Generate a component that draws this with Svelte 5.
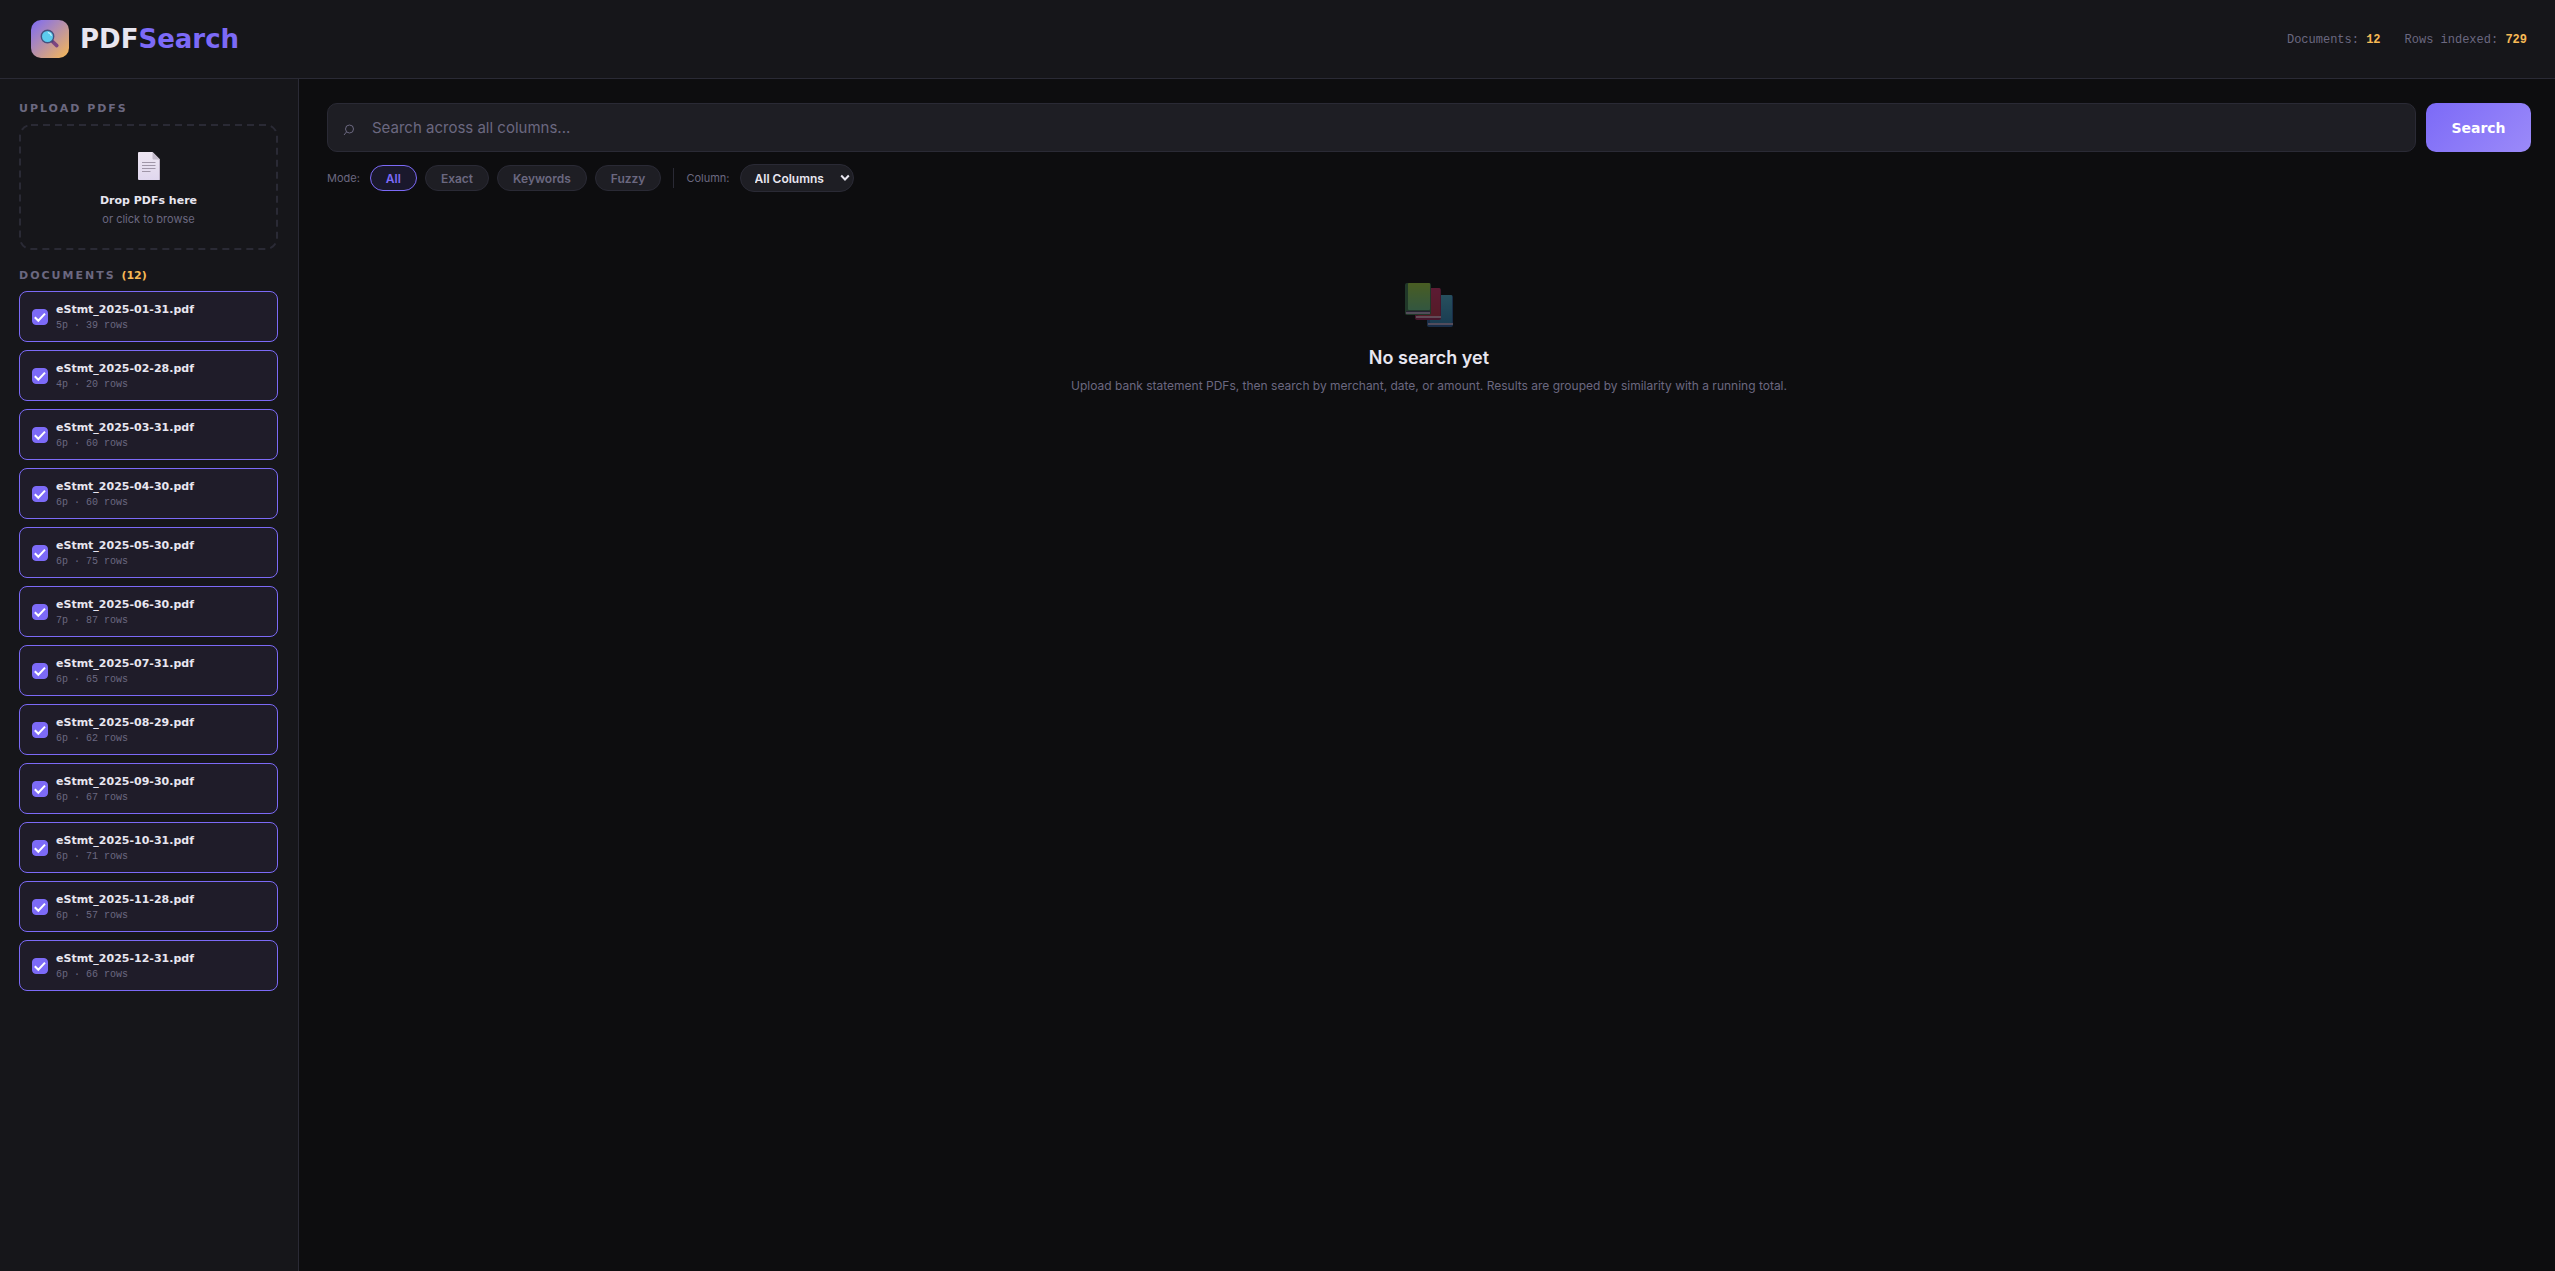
<script>
  const docs = $state(
    [
      ['01-31', 5, 39],
      ['02-28', 4, 20],
      ['03-31', 6, 60],
      ['04-30', 6, 60],
      ['05-30', 6, 75],
      ['06-30', 7, 87],
      ['07-31', 6, 65],
      ['08-29', 6, 62],
      ['09-30', 6, 67],
      ['10-31', 6, 71],
      ['11-28', 6, 57],
      ['12-31', 6, 66]
    ].map(([date, pages, rows]) => ({ name: `eStmt_2025-${date}.pdf`, pages, rows, checked: true }))
  );
  const totalRows = $derived(docs.reduce((sum, d) => sum + d.rows, 0));

  const modes = ['All', 'Exact', 'Keywords', 'Fuzzy'];
  let mode = $state('All');
  let query = $state('');
</script>

<div class="app">
  <header>
    <div class="brand">
      <span class="badge">
        <svg viewBox="0 0 20 20" width="20" height="20" aria-hidden="true">
          <path d="M12.2 12.2l4.6 4.4" stroke="#7b4580" stroke-width="3.6" stroke-linecap="round" />
          <path d="M11 11l2 2" stroke="#55406f" stroke-width="2" />
          <circle cx="7.5" cy="7.5" r="6.2" fill="#5ccbee" stroke="#46517f" stroke-width="1.4" />
          <path d="M8.4 3.6a4 4 0 0 1 2.8 2.8" stroke="#c5efff" stroke-width="1.3" stroke-linecap="round" fill="none" />
        </svg>
      </span>
      <h1>PDF<span>Search</span></h1>
    </div>
    <div class="stats">
      <span>Documents: <b>{docs.length}</b></span>
      <span>Rows indexed: <b>{totalRows}</b></span>
    </div>
  </header>

  <div class="body">
    <aside>
      <h2>Upload PDFs</h2>
      <button class="drop" type="button">
        <svg class="outline" aria-hidden="true">
          <rect x="1" y="1" rx="11" />
        </svg>
        <svg viewBox="0 0 22 28" width="22" height="28" aria-hidden="true">
          <defs>
            <linearGradient id="sheet" x1="0" y1="0" x2="0" y2="1">
              <stop offset="0" stop-color="#eee6f2" />
              <stop offset="1" stop-color="#e0d7ee" />
            </linearGradient>
          </defs>
          <path d="M1 0H14.5L22 7.5V27a1 1 0 0 1-1 1H1a1 1 0 0 1-1-1V1a1 1 0 0 1 1-1z" fill="url(#sheet)" />
          <path d="M14.5 0L22 7.5h-6.5a1 1 0 0 1-1-1z" fill="#c3bacb" />
          <path d="M21.5 8v19.5" stroke="#bdb1c6" />
          <path d="M4 10.5h13.500M4 13.500h13.500M4 16.500h13.500M4 19.500h8.500" stroke="#a096a8" />
        </svg>
        <strong>Drop PDFs here</strong>
        <span>or click to browse</span>
      </button>

      <h2>Documents <b>({docs.length})</b></h2>
      <ul>
        {#each docs as doc}
          <li>
            <label class="doc" class:selected={doc.checked}>
              <input type="checkbox" bind:checked={doc.checked} />
              <svg class="tick" viewBox="0 0 16 16" width="16" height="16" aria-hidden="true">
                <path d="M2.800 8.200L6.300 11.700L13 4.600" />
              </svg>
              <span class="info">
                <span class="name">{doc.name}</span>
                <span class="meta">{doc.pages}p · {doc.rows} rows</span>
              </span>
            </label>
          </li>
        {/each}
      </ul>
    </aside>

    <main>
      <form class="search" onsubmit={(e) => e.preventDefault()}>
        <label class="field">
          <svg viewBox="0 0 12 12" width="12" height="12" aria-hidden="true">
            <circle cx="6.500" cy="5" r="4" />
            <path d="M3.600 7.800L1 11" />
          </svg>
          <input type="text" aria-label="Search" placeholder="Search across all columns..." bind:value={query} />
        </label>
        <button class="submit" type="submit">Search</button>
      </form>

      <div class="filters">
        <span class="caption">Mode:</span>
        {#each modes as m}
          <button type="button" class="chip" class:active={mode === m} onclick={() => (mode = m)}>{m}</button>
        {/each}
        <span class="divider"></span>
        <label class="caption" for="column">Column:</label>
        <span class="picker">
          <select id="column">
            <option>All Columns</option>
          </select>
          <svg viewBox="0 0 10 8" width="10" height="8" aria-hidden="true"><path d="M1.200 1.500L5 5.500L8.800 1.500" /></svg>
        </span>
      </div>

      <section class="empty">
        <svg viewBox="0 0 48 44" width="48" height="44" aria-hidden="true">
          <defs>
            <linearGradient id="green" x1="0" y1="0" x2="0" y2="1">
              <stop offset="0" stop-color="#a3d540" />
              <stop offset="1" stop-color="#6cc58a" />
            </linearGradient>
            <linearGradient id="red" x1="0" y1="0" x2="0" y2="1">
              <stop offset="0" stop-color="#d3306b" />
              <stop offset="1" stop-color="#c0304a" />
            </linearGradient>
            <linearGradient id="blue" x1="0" y1="0" x2="0" y2="1">
              <stop offset="0" stop-color="#4eb4d4" />
              <stop offset="1" stop-color="#2f86b8" />
            </linearGradient>
          </defs>
          <rect x="22" y="12" width="26" height="32" rx="2" fill="#2c5f9e" />
          <rect x="25" y="12" width="22" height="28" rx="1" fill="url(#blue)" />
          <rect x="23" y="40" width="25" height="2" fill="#b9aad0" />
          <rect x="10" y="5" width="26" height="32" rx="2" fill="#9c2559" />
          <rect x="13" y="5" width="22" height="28" rx="1" fill="url(#red)" />
          <rect x="11" y="33" width="25" height="2" fill="#e0a9c4" />
          <rect x="0" y="0" width="26" height="32" rx="2" fill="#3e7a50" />
          <rect x="3" y="0" width="22" height="27" rx="1" fill="url(#green)" />
          <rect x="1" y="28" width="24" height="3" fill="#4a4265" />
          <rect x="1" y="29" width="24" height="2" fill="#b9aac8" />
        </svg>
        <h3>No search yet</h3>
        <p>
          Upload bank statement PDFs, then search by merchant, date, or amount. Results are grouped by similarity with a
          running total.
        </p>
      </section>
    </main>
  </div>
</div>

<style>
  :global(body) {
    background: #0d0d0f;
  }

  .app {
    --surface: #16161a;
    --raised: #1e1e24;
    --line: #2a2a35;
    --accent: #7c6af7;
    --amber: #f7b955;
    --muted: #6b6880;
    --text: #e8e6f0;
    --wide: 'DejaVu Sans', Verdana, sans-serif;
    min-height: 100vh;
    display: flex;
    flex-direction: column;
    background: #0d0d0f;
    color: var(--text);
    font-family: Inter, 'Liberation Sans', sans-serif;
    font-size: 12px;
  }

  .app * {
    box-sizing: border-box;
  }

  button,
  input,
  select {
    font: inherit;
    color: inherit;
  }

  h1,
  h2,
  h3,
  p,
  ul {
    margin: 0;
    padding: 0;
  }

  header {
    display: flex;
    align-items: center;
    justify-content: space-between;
    padding: 20px 28px 20px 31px;
    background: var(--surface);
    border-bottom: 1px solid var(--line);
  }

  .brand {
    display: flex;
    align-items: center;
    gap: 11px;
  }

  .badge {
    display: grid;
    place-items: center;
    width: 38px;
    height: 38px;
    border-radius: 10px;
    background: linear-gradient(135deg, var(--accent), var(--amber));
  }

  h1 {
    font-family: var(--wide);
    font-size: 26px;
    line-height: 30px;
    font-weight: 700;
  }

  h1 span {
    color: var(--accent);
  }

  .stats {
    display: flex;
    gap: 24px;
    padding-top: 2px;
    font-family: 'Liberation Mono', monospace;
    font-size: 12px;
    color: var(--muted);
  }

  .stats b {
    color: var(--amber);
  }

  .body {
    flex: 1;
    display: flex;
  }

  aside {
    flex: none;
    width: 299px;
    padding: 22px 20px 22px 19px;
    background: var(--surface);
    border-right: 1px solid var(--line);
  }

  h2 {
    font-family: var(--wide);
    font-size: 11px;
    line-height: 16px;
    font-weight: 700;
    letter-spacing: 2px;
    text-transform: uppercase;
    color: var(--muted);
  }

  h2 b {
    letter-spacing: 0;
    color: var(--amber);
  }

  .drop {
    position: relative;
    display: flex;
    flex-direction: column;
    align-items: center;
    width: 100%;
    margin: 7px 0 18px;
    padding: 28px 20px 22px;
    border: 0;
    border-radius: 12px;
    background: none;
    cursor: pointer;
  }

  .outline {
    position: absolute;
    inset: 0;
    width: 100%;
    height: 100%;
  }

  .outline rect {
    width: calc(100% - 2px);
    height: calc(100% - 2px);
    fill: none;
    stroke: var(--line);
    stroke-width: 2;
    stroke-dasharray: 7 5;
  }

  .drop strong {
    margin-top: 12px;
    font-family: var(--wide);
    font-size: 11px;
    line-height: 18px;
    font-weight: 700;
  }

  .drop span {
    font-size: 11px;
    line-height: 18px;
    color: var(--muted);
  }

  ul {
    display: flex;
    flex-direction: column;
    gap: 8px;
    margin-top: 7px;
    list-style: none;
  }

  .doc {
    display: grid;
    grid-template-columns: 16px 1fr;
    column-gap: 8px;
    align-items: center;
    padding: 9px 12px 8px;
    border: 1px solid var(--line);
    border-radius: 8px;
    background: var(--raised);
    cursor: pointer;
  }

  .doc.selected {
    border-color: var(--accent);
    background: #1f1c29;
  }

  .doc input,
  .tick {
    grid-area: 1 / 1;
    width: 16px;
    height: 16px;
    margin: 0;
  }

  .doc input {
    appearance: none;
    border: 1px solid var(--muted);
    border-radius: 4px;
  }

  .doc input:checked {
    border-color: var(--accent);
    background: var(--accent);
  }

  .tick {
    z-index: 1;
    pointer-events: none;
    fill: none;
    stroke: #fff;
    stroke-width: 2;
    visibility: hidden;
  }

  .doc input:checked + .tick {
    visibility: visible;
  }

  .info {
    display: flex;
    flex-direction: column;
  }

  .name {
    font-family: var(--wide);
    font-size: 11px;
    line-height: 18px;
    font-weight: 700;
  }

  .meta {
    font-family: 'Liberation Mono', monospace;
    font-size: 10px;
    line-height: 14px;
    color: var(--muted);
  }

  main {
    flex: 1;
    min-width: 0;
    padding: 24px 24px 24px 28px;
  }

  .search {
    display: flex;
    gap: 10px;
  }

  .field {
    flex: 1;
    display: flex;
    align-items: center;
    gap: 17px;
    height: 49px;
    padding: 0 15px;
    border: 1px solid var(--line);
    border-radius: 10px;
    background: var(--raised);
  }

  .field svg {
    margin-top: 4px;
    fill: none;
    stroke: var(--muted);
  }

  .field input {
    flex: 1;
    height: 100%;
    padding: 0;
    border: 0;
    outline: 0;
    background: none;
    font-size: 15px;
  }

  .field input::placeholder {
    color: var(--muted);
    opacity: 1;
  }

  .submit {
    width: 105px;
    border: 0;
    border-radius: 10px;
    background: linear-gradient(135deg, var(--accent), #9b8af9);
    color: #fff;
    font-family: var(--wide);
    font-size: 14px;
    font-weight: 700;
    cursor: pointer;
  }

  .filters {
    display: flex;
    align-items: center;
    gap: 8px;
    margin-top: 12px;
  }

  .caption {
    margin-right: 2px;
    font-size: 11px;
    color: var(--muted);
  }

  .chip {
    height: 26px;
    padding: 0 15px;
    border: 1px solid var(--line);
    border-radius: 13px;
    background: var(--raised);
    color: var(--muted);
    font-size: 12px;
    font-weight: 600;
    cursor: pointer;
  }

  .chip.active {
    border-color: var(--accent);
    background: #1a182c;
    color: var(--accent);
  }

  .divider {
    width: 1px;
    height: 20px;
    margin: 0 4px;
    background: var(--line);
  }

  .picker {
    position: relative;
    display: flex;
  }

  .picker svg {
    position: absolute;
    right: 4px;
    top: 10px;
    pointer-events: none;
    fill: none;
    stroke: var(--text);
    stroke-width: 2;
  }

  select {
    appearance: none;
    height: 28px;
    padding: 0 28px 0 14px;
    border: 1px solid var(--line);
    border-radius: 14px;
    background: var(--raised);
    font-size: 12px;
    font-weight: 600;
  }

  .empty {
    display: flex;
    flex-direction: column;
    align-items: center;
    padding: 91px 20px 60px;
    text-align: center;
  }

  .empty svg {
    opacity: 0.4;
  }

  .empty h3 {
    margin-top: 19px;
    font-size: 18px;
    line-height: 24px;
    font-weight: 600;
  }

  .empty p {
    margin-top: 6px;
    font-size: 12px;
    line-height: 20px;
    color: var(--muted);
  }
</style>
